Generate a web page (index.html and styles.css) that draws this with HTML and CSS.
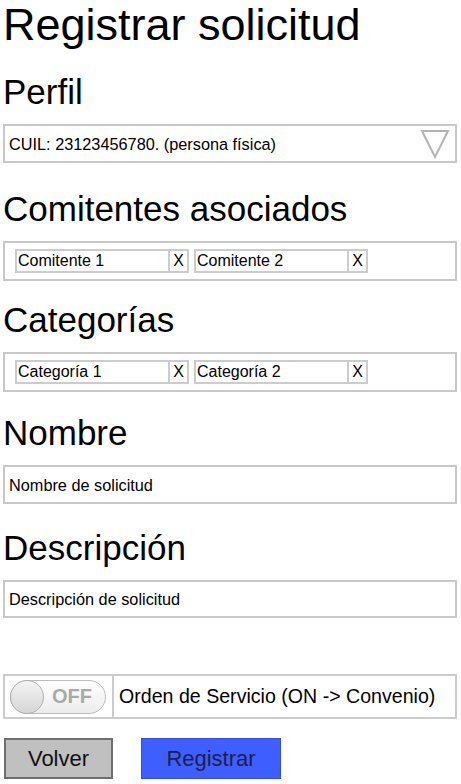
FILE: index.html
```html
<!DOCTYPE html>
<html lang="es">
<head>
<meta charset="utf-8">
<title>Registrar solicitud</title>
<link rel="stylesheet" href="styles.css">
</head>
<body>
<main class="page">
  <h1 class="title">Registrar solicitud</h1>

  <h2 class="label label-perfil">Perfil</h2>
  <div class="field select">
    <span class="field-text">CUIL: 23123456780. (persona física)</span>
    <svg class="chevron" width="30" height="30" viewBox="0 0 30 30">
      <path d="M2 2 L28 2 L15 28 Z" fill="none" stroke="#b4b4b4" stroke-width="2"/>
    </svg>
  </div>

  <h2 class="label label-comit">Comitentes asociados</h2>
  <div class="field tags">
    <div class="chip"><span class="chip-text">Comitente 1</span><span class="chip-x">X</span></div>
    <div class="chip"><span class="chip-text">Comitente 2</span><span class="chip-x">X</span></div>
  </div>

  <h2 class="label label-cat">Categorías</h2>
  <div class="field tags">
    <div class="chip"><span class="chip-text">Categoría 1</span><span class="chip-x">X</span></div>
    <div class="chip"><span class="chip-text">Categoría 2</span><span class="chip-x">X</span></div>
  </div>

  <h2 class="label label-nombre">Nombre</h2>
  <div class="field input"><span class="field-text">Nombre de solicitud</span></div>

  <h2 class="label label-desc">Descripción</h2>
  <div class="field input input-desc"><span class="field-text">Descripción de solicitud</span></div>

  <div class="toggle-row">
    <div class="toggle-cell">
      <div class="switch">
        <span class="knob"></span>
        <span class="switch-text">OFF</span>
      </div>
    </div>
    <div class="toggle-label">Orden de Servicio (ON -&gt; Convenio)</div>
  </div>

  <div class="actions">
    <button class="btn btn-back">Volver</button>
    <button class="btn btn-primary">Registrar</button>
  </div>
</main>
</body>
</html>
```

FILE: styles.css
```css
* { box-sizing: border-box; }

body {
  margin: 0;
  background: #ffffff;
  font-family: "Liberation Sans", Arial, sans-serif;
  color: #000;
}

.page {
  width: 461px;
  padding: 0 4px 0 3px;
}

.title {
  margin: 0;
  font-size: 45px;
  line-height: 50px;
  font-weight: normal;
}

.label {
  margin: 0 0 15px 0;
  font-size: 35px;
  line-height: 34px;
  font-weight: normal;
}

.label-perfil { margin-top: 25px; }
.label-comit { margin-top: 29px; }
.label-cat { margin-top: 22px; }
.label-nombre { margin-top: 24px; }
.label-desc { margin-top: 27px; }

.field {
  border: 2px solid #c8c8c8;
  width: 454px;
  display: flex;
  align-items: center;
}

.field-text {
  font-size: 16.3px;
  line-height: 18px;
}

.select {
  height: 39px;
  padding: 0 4px 0 4px;
  justify-content: space-between;
}

.chevron { display: block; margin-top: 1px; margin-right: 1px; }

.input {
  height: 39px;
  padding: 0 4px;
}

.input-desc { height: 38px; }

.tags {
  height: 40px;
  padding: 0 10px;
  gap: 5px;
}

.chip {
  display: flex;
  height: 24px;
  border: 2px solid #cccccc;
  font-size: 16px;
  line-height: 20px;
}

.chip-text {
  width: 153px;
  padding-left: 1px;
  border-right: 2px solid #cccccc;
}

.chip-x {
  width: 17px;
  text-align: center;
}

.toggle-row {
  margin-top: 56px;
  width: 454px;
  height: 45px;
  border: 2px solid #cccccc;
  display: flex;
}

.toggle-cell {
  width: 109px;
  border-right: 2px solid #cccccc;
  display: flex;
  align-items: center;
  padding-left: 5px;
}

.switch {
  position: relative;
  width: 96px;
  height: 34px;
  border-radius: 17px;
  border: 1px solid #bdbdbd;
  background: linear-gradient(#ffffff, #ececec);
  display: flex;
  align-items: center;
  justify-content: flex-end;
  padding-right: 13px;
}

.knob {
  position: absolute;
  left: -1px;
  top: -1px;
  width: 34px;
  height: 34px;
  border-radius: 50%;
  border: 1px solid #b0b0b0;
  background: linear-gradient(#f4f4f4, #d6d6d6);
}

.switch-text {
  font-family: "Liberation Sans", Arial, sans-serif;
  font-weight: bold;
  font-size: 20px;
  color: #a9a9a9;
}

.toggle-label {
  flex: 1;
  display: flex;
  align-items: center;
  padding-left: 5px;
  font-size: 19.6px;
}

.actions {
  margin-top: 19px;
  display: flex;
  gap: 28px;
  padding-left: 1px;
}

.btn {
  height: 41px;
  font-family: "Liberation Sans", Arial, sans-serif;
  font-size: 22px;
  padding: 0;
  cursor: pointer;
}

.btn-back {
  width: 109px;
  background: #c0c0c0;
  border: 2px solid #6e6e6e;
  color: #111;
}

.btn-primary {
  width: 140px;
  background: #3f5eff;
  border: 1px solid #3350dd;
  color: #1b2050;
}
```
